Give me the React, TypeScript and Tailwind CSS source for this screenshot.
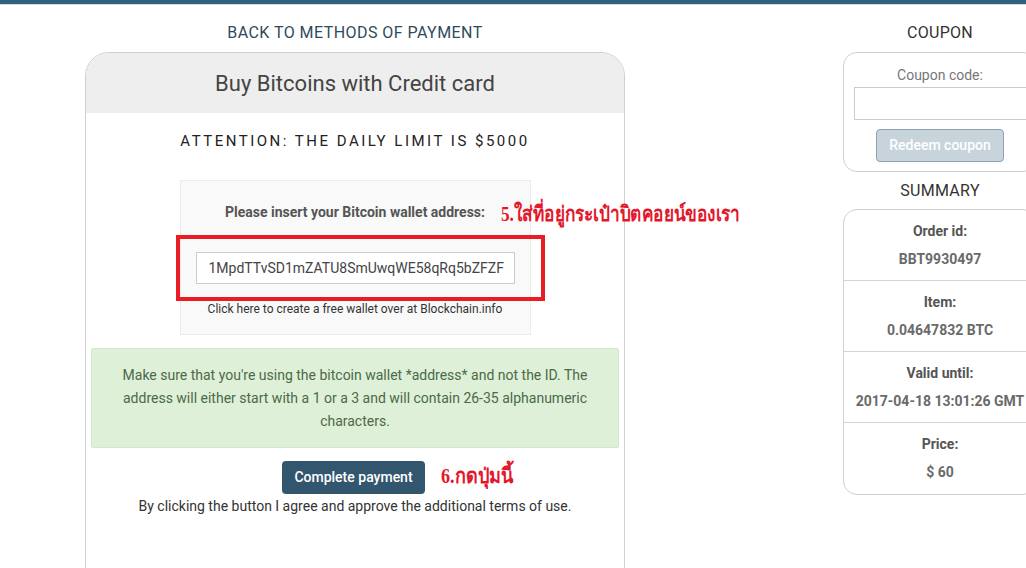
import React from 'react';

const SUMMARY = [
  { label: 'Order id:', value: 'BBT9930497' },
  { label: 'Item:', value: '0.04647832 BTC' },
  { label: 'Valid until:', value: '2017-04-18 13:01:26 GMT' },
  { label: 'Price:', value: '$ 60' },
];

const thai = { fontFamily: '"Liberation Serif", "DejaVu Serif", serif' };

const PaymentCard: React.FC = () => (
  <div className="w-[540px] shrink-0">
    <div className="h-[47px] pt-[18px] text-center text-[16px] leading-5 text-[#2f4a5c] uppercase tracking-[0.45px]">
      Back to methods of payment
    </div>
    <div className="border border-[#cfcfcf] rounded-t-[24px] h-[540px]">
      <div className="h-[60px] bg-[#eeeeee] rounded-t-[23px] flex items-center justify-center text-[22px] text-[#444]">
        Buy Bitcoins with Credit card
      </div>
      <div className="pt-[18px] text-center text-[15px] text-[#222] tracking-[2.5px] leading-5">
        ATTENTION: THE DAILY LIMIT IS $5000
      </div>
      <div className="mt-[29px] mx-auto w-[351px] h-[155px] bg-[#f9f9f9] border border-[#ececec] relative flex flex-col items-center">
        <div className="pt-[21px] text-[14px] font-bold text-[#555] leading-5">
          Please insert your Bitcoin wallet address:
        </div>
        <input
          readOnly
          value="1MpdTTvSD1mZATU8SmUwqWE58qRq5bZFZF"
          className="mt-[30px] w-[319px] h-[32px] border border-[#cccccc] bg-white pl-[12px] pr-0 text-[14px] text-[#444] outline-none"
        />
        <div className="mt-[17px] text-[12px] text-[#333] leading-4">
          Click here to create a free wallet over at Blockchain.info
        </div>
        <div className="absolute left-[-5px] top-[54px] w-[369px] h-[66px] border-[4px] border-[#ea1c24]" />
        <div
          className="absolute left-[320px] top-[19px] whitespace-nowrap text-[21px] font-bold text-[#e3172b] leading-7 origin-left scale-x-[0.82]"
          style={thai}
        >
          5.ใส่ที่อยู่กระเป๋าบิตคอยน์ของเรา
        </div>
      </div>
      <div className="mt-[13px] mx-[5px] bg-[#dff0d8] border border-[#d3e8c8] rounded-[2px] px-6 pt-[15px] pb-[14px] text-center text-[14px] leading-[23px] text-[#4a6a48]">
        Make sure that you're using the bitcoin wallet *address* and not the ID. The address will either start with a 1 or a 3 and will contain 26-35 alphanumeric characters.
      </div>
      <div className="mt-[13px] flex justify-center">
        <div className="relative mr-[3px]">
          <button className="h-[33px] w-[143px] bg-[#33566f] rounded-[4px] text-white text-[14px] font-medium">
            Complete payment
          </button>
          <div
            className="absolute left-full top-[-1px] ml-[16px] whitespace-nowrap text-[21px] font-bold text-[#e3172b] leading-8 origin-left scale-x-[0.86]"
            style={thai}
          >
            6.กดปุ่มนี้
          </div>
        </div>
      </div>
      <div className="mt-[2px] text-center text-[14px] text-[#333] leading-5">
        By clicking the button I agree and approve the additional terms of use.
      </div>
    </div>
  </div>
);

const SideBar: React.FC = () => (
  <div className="w-[194px] shrink-0 ml-[218px]">
    <div className="h-[47px] pt-[18px] text-center text-[16px] leading-5 text-[#333] tracking-[0.3px]">COUPON</div>
    <div className="h-[120px] border border-[#cfcfcf] rounded-[14px] flex flex-col items-center">
      <div className="pt-[12px] text-[14px] text-[#777] leading-5">Coupon code:</div>
      <input className="mt-[2px] ml-[10px] self-stretch h-[33px] border border-[#cccccc] bg-white outline-none" />
      <button
        disabled
        className="mt-[9px] w-[128px] h-[33px] bg-[#c8d4dc] border border-[#8ea3b2] rounded-[4px] text-white text-[14px] font-medium"
      >
        Redeem coupon
      </button>
    </div>
    <div className="h-[37px] flex items-center justify-center text-[16px] text-[#333] tracking-[0.3px]">SUMMARY</div>
    <div className="border border-[#cfcfcf] rounded-[14px]">
      {SUMMARY.map((row, i) => (
        <div
          key={row.label}
          className={`h-[71px] flex flex-col items-center pt-[11px] gap-[8px] text-[14px] font-bold leading-5 ${
            i < SUMMARY.length - 1 ? 'border-b border-[#d4d4d4]' : ''
          }`}
        >
          <div className="text-[#555]">{row.label}</div>
          <div className="text-[#6a6a6a] whitespace-nowrap">{row.value}</div>
        </div>
      ))}
    </div>
  </div>
);

const App: React.FC = () => {
  return (
    <div className="w-full h-[568px] overflow-hidden bg-white" style={{ fontFamily: 'Roboto, "Liberation Sans", sans-serif' }}>
      <div className="h-[4px] bg-[#2e5f80]" />
      <div className="h-[1px] bg-[#d8d8d8]" />
      <div className="flex pl-[85px]">
        <PaymentCard />
        <SideBar />
      </div>
    </div>
  );
};

export default App;
